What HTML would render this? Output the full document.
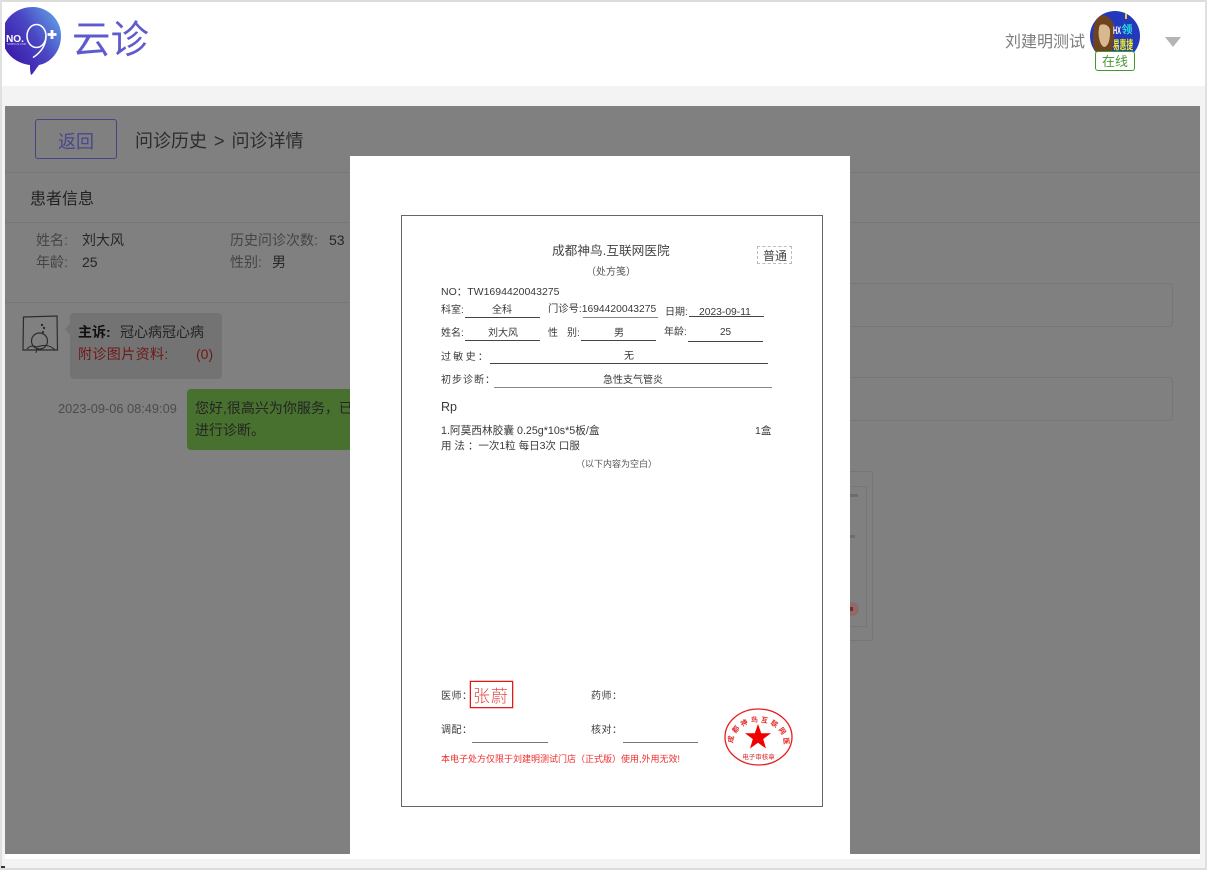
<!DOCTYPE html>
<html lang="zh">
<head>
<meta charset="utf-8">
<title>云诊</title>
<style>
html,body{margin:0;padding:0;background:#fff}
body{position:relative;width:1207px;height:870px;overflow:hidden;font-family:"Liberation Sans","Noto Sans CJK SC",sans-serif}
div,span,a{position:absolute;box-sizing:border-box}
.t{white-space:nowrap;line-height:1.2}
.p{color:#3a3a3a;font-size:10px;white-space:nowrap;line-height:14px}
.l{height:1px;background:#444}
</style>
</head>
<body>
<div style="left:0;top:0;width:1207px;height:870px;background:#fff"></div>
<div style="left:2px;top:86px;width:1203px;height:782px;background:#f3f3f3"></div>
<div style="left:5px;top:854px;width:1195px;height:5px;background:#fff"></div>

<!-- outer border -->
<div style="left:0;top:0;width:1207px;height:2px;background:#dcdcdc"></div>
<div style="left:0;top:868px;width:1207px;height:2px;background:#dcdcdc"></div>
<div style="left:0;top:0;width:2px;height:870px;background:#e0e0e0"></div>
<div style="left:1205px;top:0;width:2px;height:870px;background:#e0e0e0"></div>

<!-- logo -->
<svg style="position:absolute;left:0;top:0" width="70" height="80" viewBox="0 0 70 80">
<defs>
<linearGradient id="lg" x1="0.1" y1="0.8" x2="0.95" y2="0.15"><stop offset="0" stop-color="#3a16a8"/><stop offset="0.55" stop-color="#4a47c4"/><stop offset="1" stop-color="#5f9ae4"/></linearGradient>
<clipPath id="lc"><rect x="5" y="0" width="60" height="80"/></clipPath>
</defs>
<g clip-path="url(#lc)">
<path d="M33 7A28.500 28.500 0 0 1 61 36C61 52 50 63 39 65C35 70 33 74 31 75C30 72 30 68 30 65C14 63 2 51 2 36C2 19 16 7 33 7Z" fill="url(#lg)"/>
</g>
<text x="6" y="42" font-family="Liberation Sans" font-size="10" font-weight="bold" fill="#fff" textLength="18" lengthAdjust="spacingAndGlyphs">NO.</text>
<text x="7" y="45" font-family="Liberation Sans" font-size="2.600" fill="#d8d8f5">NO9PLUS.COM</text>
<ellipse cx="36.500" cy="36" rx="9.500" ry="11.500" fill="none" stroke="#fff" stroke-width="1.500"/>
<path d="M46 36C46 46 40 53 33 57.500" fill="none" stroke="#fff" stroke-width="1.500"/>
<path d="M47.500 34.500h9M52 30v9" stroke="#fff" stroke-width="2.800" fill="none"/>
</svg>
<div class="t" style="left:72px;top:16px;font-size:38.500px;color:#5f5bcd;line-height:50px">云诊</div>

<!-- user -->
<div class="t" style="left:1005px;top:32px;font-size:16px;color:#7d7d7d;line-height:21px">刘建明测试</div>
<svg style="position:absolute;left:1089px;top:10px" width="52" height="52" viewBox="0 0 52 52">
<defs><clipPath id="ac"><circle cx="26" cy="26" r="25"/></clipPath></defs>
<g clip-path="url(#ac)">
<rect width="52" height="52" fill="#2438bc"/>
<path d="M9 6C17 3 24 9 25 17C26 26 24 36 22 46L6 46C3 34 3 14 9 6Z" fill="#6e4420"/>
<path d="M11 15C16 13 22 16 21 23C21 30 19 37 15 37C10 35 8 21 11 15Z" fill="#d8b88e"/>
<text x="24" y="24" font-family="Liberation Sans,sans-serif" font-size="11" font-weight="bold" fill="#fff" textLength="8" lengthAdjust="spacingAndGlyphs">HX</text>
<text x="32.500" y="23" font-family="Noto Sans CJK SC,sans-serif" font-size="11" font-weight="bold" fill="#20e0e0">领</text>
<text x="24" y="39" font-family="Noto Sans CJK SC,sans-serif" font-size="12" font-weight="bold" fill="#f5f020" textLength="20" lengthAdjust="spacingAndGlyphs">易惠捷</text>
<rect x="36" y="2" width="2" height="7" fill="#e8d040"/>
</g>
</svg>
<div style="left:1095px;top:51px;width:40px;height:20px;background:#fff;border:1px solid #3f9a2e;border-radius:3px"></div>
<div class="t" style="left:1095px;top:54px;width:40px;text-align:center;font-size:13px;color:#4a9a3a;line-height:16px">在线</div>
<div style="left:1165px;top:37px;width:0;height:0;border-left:8px solid transparent;border-right:8px solid transparent;border-top:10px solid #b4b4b4"></div>

<!-- darkened panel -->
<div style="left:5px;top:106px;width:1195px;height:748px;background:#808080"></div>
<div style="left:35px;top:119px;width:82px;height:40px;border:1px solid #444488;border-radius:3px"></div>
<div class="t" style="left:35px;top:130px;width:82px;text-align:center;font-size:18px;color:#48488c;line-height:24px">返回</div>
<div class="t" style="left:135px;top:129px;font-size:18px;color:#2c2c2c;line-height:24px;word-spacing:2px">问诊历史 &gt; 问诊详情</div>
<div style="left:5px;top:172px;width:345px;height:1px;background:#777"></div>
<div style="left:850px;top:172px;width:350px;height:1px;background:#777"></div>
<div class="t" style="left:30px;top:189px;font-size:16px;color:#222;line-height:21px">患者信息</div>
<div style="left:5px;top:222px;width:345px;height:1px;background:#777"></div>
<div style="left:850px;top:222px;width:350px;height:1px;background:#777"></div>

<div class="t" style="left:36px;top:231px;font-size:14px;color:#444;line-height:18px">姓名:</div>
<div class="t" style="left:82px;top:231px;font-size:14px;color:#262626;line-height:18px">刘大风</div>
<div class="t" style="left:36px;top:253px;font-size:14px;color:#444;line-height:18px">年龄:</div>
<div class="t" style="left:82px;top:253px;font-size:14px;color:#262626;line-height:18px">25</div>
<div class="t" style="left:230px;top:231px;font-size:14px;color:#444;line-height:18px">历史问诊次数:</div>
<div class="t" style="left:329px;top:231px;font-size:14px;color:#262626;line-height:18px">53</div>
<div class="t" style="left:230px;top:253px;font-size:14px;color:#444;line-height:18px">性别:</div>
<div class="t" style="left:272px;top:253px;font-size:14px;color:#262626;line-height:18px">男</div>
<div style="left:5px;top:302px;width:345px;height:1px;background:#777"></div>

<!-- sketch avatar -->
<svg style="position:absolute;left:21px;top:315px" width="38" height="38" viewBox="0 0 38 38">
<path d="M2.500 2L36 1L36.500 35L2 35Z" fill="none" stroke="#2c2c2c" stroke-width="1.200"/>
<circle cx="18.500" cy="26" r="8" fill="none" stroke="#2c2c2c" stroke-width="1.200"/>
<path d="M6 34C9 30 13 31 16 32C22 30 28 29 34 35" fill="none" stroke="#2c2c2c" stroke-width="1.100"/>
<path d="M16 33L15 38" stroke="#2c2c2c" fill="none"/>
<circle cx="21" cy="10" r="1.200" fill="#2c2c2c"/><circle cx="23" cy="13" r="1.200" fill="#2c2c2c"/><circle cx="22" cy="17" r="1.100" fill="#2c2c2c"/>
</svg>

<!-- complaint bubble -->
<div style="left:70px;top:313px;width:152px;height:66px;background:#737373;border-radius:4px"></div>
<div style="left:65px;top:323px;width:0;height:0;border-top:6px solid transparent;border-bottom:6px solid transparent;border-right:5px solid #737373"></div>
<div class="t" style="left:78px;top:323px;font-size:14px;color:#101010;font-weight:bold;line-height:18px">主诉:</div>
<div class="t" style="left:120px;top:323px;font-size:14px;color:#242424;line-height:18px">冠心病冠心病</div>
<div class="t" style="left:78px;top:345px;font-size:14px;color:#701818;line-height:18px;letter-spacing:.4px">附诊图片资料:</div>
<div class="t" style="left:196px;top:345px;font-size:14px;color:#701818;line-height:18px">(0)</div>

<!-- message -->
<div class="t" style="left:58px;top:400px;font-size:12.800px;color:#4c4c4c;line-height:17px">2023-09-06 08:49:09</div>
<div style="left:187px;top:389px;width:163px;height:61px;background:#48702e;border-radius:4px 0 0 4px"></div>
<div class="t" style="left:195px;top:399px;font-size:14px;color:#242424;line-height:18px;width:155px;overflow:hidden">您好,很高兴为你服务，已</div>
<div class="t" style="left:195px;top:421px;font-size:14px;color:#242424;line-height:18px">进行诊断。</div>

<!-- right side under overlay -->
<div style="left:840px;top:283px;width:333px;height:44px;border:1px solid #767676;border-radius:3px"></div>
<div style="left:840px;top:377px;width:333px;height:44px;border:1px solid #767676;border-radius:3px"></div>
<div style="left:840px;top:471px;width:33px;height:170px;border:1px solid #767676"></div>
<div style="left:840px;top:486px;width:27px;height:141px;border:1px solid #767676"></div>
<div style="left:850px;top:494px;width:8px;height:3px;background:#6c6c6c"></div>
<div style="left:850px;top:535px;width:5px;height:3px;background:#6c6c6c"></div>
<div style="left:846px;top:602px;width:13px;height:14px;border-radius:50%;background:#8f6a6a"></div>
<div style="left:848px;top:607px;width:5px;height:4px;background:#7c2a2a"></div>

<!-- modal -->
<div style="left:350px;top:156px;width:500px;height:698px;background:#fff"></div>
<div style="left:401px;top:215px;width:422px;height:592px;border:1px solid #666"></div>

<div class="t" style="left:552px;top:243px;font-size:12.700px;color:#444;line-height:17px">成都神鸟.互联网医院</div>
<div class="t" style="left:586px;top:266px;font-size:10px;color:#555;line-height:14px">（处方笺）</div>
<div style="left:757px;top:246px;width:35px;height:18px;border:1px dashed #bbb"></div>
<div class="t" style="left:763px;top:248px;font-size:12px;color:#444;line-height:17px">普通</div>

<div class="p" style="left:441px;top:285px;font-size:10.500px">NO：TW1694420043275</div>
<div class="p" style="left:441px;top:304px">科室:</div>
<div class="p" style="left:492px;top:304px">全科</div>
<div class="l" style="left:465px;top:317px;width:75px"></div>
<div class="p" style="left:548px;top:303px;font-size:10.300px">门诊号:1694420043275</div>
<div class="l" style="left:583px;top:317px;width:75px;background:#888"></div>
<div class="p" style="left:665px;top:306px">日期:</div>
<div class="p" style="left:699px;top:306px;font-size:10.300px">2023-09-11</div>
<div class="l" style="left:689px;top:316px;width:75px"></div>

<div class="p" style="left:441px;top:327px">姓名:</div>
<div class="p" style="left:488px;top:327px">刘大风</div>
<div class="l" style="left:465px;top:340px;width:75px"></div>
<div class="p" style="left:548px;top:327px">性</div>
<div class="p" style="left:567px;top:327px">别:</div>
<div class="p" style="left:614px;top:327px">男</div>
<div class="l" style="left:581px;top:340px;width:75px"></div>
<div class="p" style="left:664px;top:326px">年龄:</div>
<div class="p" style="left:720px;top:326px">25</div>
<div class="l" style="left:688px;top:341px;width:75px"></div>

<div class="p" style="left:441px;top:351px;letter-spacing:2.300px">过敏史：</div>
<div class="p" style="left:624px;top:350px">无</div>
<div class="l" style="left:490px;top:363px;width:278px"></div>
<div class="p" style="left:441px;top:374px;letter-spacing:1px">初步诊断：</div>
<div class="p" style="left:603px;top:374px">急性支气管炎</div>
<div class="l" style="left:494px;top:387px;width:278px;background:#888"></div>

<div class="p" style="left:441px;top:400px;font-size:12.500px">Rp</div>
<div class="p" style="left:441px;top:424px;font-size:10.700px">1.阿莫西林胶囊 0.25g*10s*5板/盒</div>
<div class="p" style="left:755px;top:424px;font-size:10.500px">1盒</div>
<div class="p" style="left:441px;top:439px;font-size:10.500px">用 法 ：一次1粒 每日3次 口服</div>
<div class="p" style="left:576px;top:457px;font-size:9px;color:#555">（以下内容为空白）</div>

<div class="p" style="left:441px;top:690px;letter-spacing:.5px">医师：</div>
<div style="left:470px;top:681px;width:43px;height:27px;border:1px solid #e01818;box-shadow:0 0 0 .5px #f08080"></div>
<div class="t" style="left:473px;top:684px;font-size:17px;color:#e84a4a;line-height:21px;font-weight:300;letter-spacing:1px;font-family:'WenQuanYi Zen Hei','Noto Sans CJK SC',sans-serif">张蔚</div>
<div class="p" style="left:591px;top:690px;letter-spacing:.5px">药师：</div>
<div class="p" style="left:441px;top:724px;letter-spacing:.5px">调配：</div>
<div class="l" style="left:472px;top:742px;width:76px;background:#777"></div>
<div class="p" style="left:591px;top:724px;letter-spacing:.5px">核对：</div>
<div class="l" style="left:623px;top:742px;width:75px;background:#777"></div>
<div class="p" style="left:441px;top:752px;font-size:9px;color:#f02c2c">本电子处方仅限于刘建明测试门店（正式版）使用,外用无效!</div>

<!-- stamp -->
<svg style="position:absolute;left:722px;top:706px" width="74" height="62" viewBox="0 0 74 62">
<defs><path id="arc" d="M11 37A25.500 21 0 1 1 62 37"/></defs>
<ellipse cx="36.500" cy="31" rx="33.500" ry="28" fill="none" stroke="#e81c1c" stroke-width="1.300"/>
<text font-family="Noto Sans CJK SC,sans-serif" font-size="7" font-weight="bold" fill="#e42a2a"><textPath href="#arc" textLength="84">成都神鸟互联网医院</textPath></text>
<polygon points="36,18 39.200,27.300 49,27.300 41.200,33 44,42.500 36,36.800 28,42.500 30.800,33 23,27.300 32.800,27.300" fill="#f00000"/>
<text x="36.500" y="53" text-anchor="middle" font-family="Noto Sans CJK SC,sans-serif" font-size="6.500" fill="#d83030">电子审核章</text>
</svg>

<div style="left:1px;top:866px;width:4px;height:2px;background:#333"></div>
</body>
</html>
